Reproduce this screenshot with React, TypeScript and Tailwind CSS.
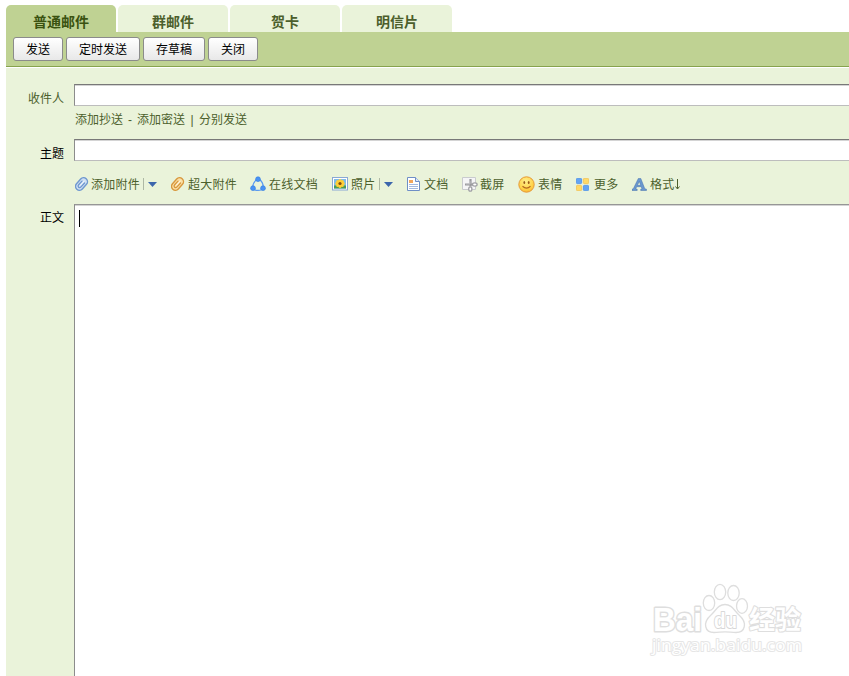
import React from "react";

const tabs = [
  { label: "普通邮件", active: true },
  { label: "群邮件", active: false },
  { label: "贺卡", active: false },
  { label: "明信片", active: false },
];

const buttons = [
  { label: "发送", width: "w-[50px]" },
  { label: "定时发送", width: "w-[74px]" },
  { label: "存草稿", width: "w-[62px]" },
  { label: "关闭", width: "w-[50px]" },
];

function Clip({ dark, light }: { dark: string; light: string }) {
  return (
    <svg width="14" height="14" viewBox="0 0 14 14" fill="none" strokeLinecap="round">
      <g transform="rotate(42 6.500 7)">
        <rect x="2.600" y="0" width="7.800" height="14" rx="3.900" fill={light} stroke={dark} strokeWidth="1.400" />
        <path d="M4.900 4.500v5c0 2.400 3.200 2.400 3.200 0V4.200" stroke={dark} strokeWidth="1.300" />
        <path d="M6.500 3v5.500" stroke="#fff" strokeWidth=".8" />
      </g>
    </svg>
  );
}

function OnlineDoc() {
  return (
    <svg width="16" height="16" viewBox="0 0 16 16">
      <path d="M7 3.500C4.500 5 3 7.500 2.800 11M9.500 3.500c2 1.500 3.700 4 3.700 7.500M4 13.500q4 1.800 8 0" fill="none" stroke="#5b9bf0" strokeWidth="1.300" />
      <g fill="#4a93f3" stroke="#3a82e4" strokeWidth=".7">
        <circle cx="8" cy="3.200" r="2.400" />
        <circle cx="3" cy="12.200" r="2.400" />
        <circle cx="13" cy="12.200" r="2.400" />
      </g>
    </svg>
  );
}

function Photo() {
  return (
    <svg width="16" height="14" viewBox="0 0 16 14">
      <rect x=".5" y=".5" width="15" height="12.500" fill="#fff" stroke="#8aa8d4" />
      <rect x="2" y="2" width="12" height="9.500" fill="#7ebbe8" />
      <path d="M2 8.500h12v3H2z" fill="#4b9a55" />
      <g fill="#ffcf33">
        <circle cx="8" cy="3.500" r="1.500" />
        <circle cx="8" cy="9.500" r="1.500" />
        <circle cx="4.800" cy="6.500" r="1.500" />
        <circle cx="11.200" cy="6.500" r="1.500" />
        <circle cx="5.700" cy="4.500" r="1.500" />
        <circle cx="10.300" cy="4.500" r="1.500" />
        <circle cx="5.700" cy="8.600" r="1.500" />
        <circle cx="10.300" cy="8.600" r="1.500" />
        <circle cx="8" cy="6.500" r="3" />
      </g>
      <circle cx="8" cy="6.500" r="1.600" fill="#7c4a10" />
    </svg>
  );
}

function Doc() {
  return (
    <svg width="13" height="14" viewBox="0 0 13 14">
      <path d="M.5.5h8l4 4v9H.5z" fill="#fff" stroke="#6f8fc6" />
      <path d="M8.500.5v4h4" fill="#dce8fa" stroke="#6f8fc6" />
      <path d="M2 3h4v3H2z" fill="#f3a65a" />
      <path d="M2 7.500h9M2 9.500h9M2 11.500h9" stroke="#a3b9df" />
    </svg>
  );
}

function Scissors() {
  return (
    <svg width="16" height="16" viewBox="0 0 16 16" fill="none">
      <path d="M.5 1.500h13v12H.5z" fill="#f5f5f7" stroke="#c9cbce" />
      <path d="M8.500 3v7.500M3 8.500h7.500" stroke="#9a9a9e" strokeWidth="2.200" />
      <path d="M8 5v3H4" stroke="#c8c8cc" strokeWidth=".8" />
      <ellipse cx="12.800" cy="8.500" rx="2.300" ry="1.600" fill="#fff" stroke="#a0a0a5" strokeWidth="1.300" />
      <ellipse cx="8.300" cy="13" rx="1.600" ry="2.200" fill="#fff" stroke="#a0a0a5" strokeWidth="1.300" />
    </svg>
  );
}

function Smiley() {
  return (
    <svg width="17" height="17" viewBox="0 0 17 17">
      <defs>
        <radialGradient id="face" cx=".45" cy=".3" r=".75">
          <stop stopColor="#fff08f" />
          <stop offset=".7" stopColor="#ffd044" />
          <stop offset="1" stopColor="#f8b238" />
        </radialGradient>
      </defs>
      <circle cx="8.500" cy="8.500" r="7.700" fill="url(#face)" stroke="#e59a38" />
      <ellipse cx="6.300" cy="6.500" rx=".9" ry="1.500" fill="#9a5a1a" />
      <ellipse cx="10.700" cy="6.500" rx=".9" ry="1.500" fill="#9a5a1a" />
      <path d="M4.500 10.300q4 3.700 8 0" fill="none" stroke="#b5691f" strokeWidth="1.200" />
    </svg>
  );
}

function More() {
  return (
    <svg width="13" height="13" viewBox="0 0 13 13">
      <rect x=".4" y=".4" width="5.200" height="5.200" rx=".8" fill="#64a4f5" stroke="#4a90ea" strokeWidth=".8" />
      <rect x="7.400" y=".4" width="5.200" height="5.200" rx=".8" fill="#ffda68" stroke="#f4c252" strokeWidth=".8" />
      <rect x=".4" y="7.400" width="5.200" height="5.200" rx=".8" fill="#ffda68" stroke="#f4c252" strokeWidth=".8" />
      <rect x="7.400" y="7.400" width="5.200" height="5.200" rx=".8" fill="#64a4f5" stroke="#4a90ea" strokeWidth=".8" />
    </svg>
  );
}

function Format() {
  return (
    <svg width="15" height="13" viewBox="0 0 15 13">
      <path d="M0 12.500v-1.300l1.300-.4L6.300.5h2.500l4 10.300 1.700.4v1.300H8.700v-1.300l1.300-.4-.8-2.100H4.700l-1 2.100 1.500.4v1.300zM5.400 7.300h3.300L7.300 3.400z" fill="#6a97cf" stroke="#4470ac" strokeWidth=".5" />
    </svg>
  );
}

function Drop() {
  return (
    <>
      <span className="ml-[3px] h-3 w-px bg-[#aeb8a4]" />
      <svg className="ml-1 mt-px" width="9" height="5" viewBox="0 0 9 5">
        <path d="M0 0h9L4.500 5z" fill="#3c66ac" />
      </svg>
    </>
  );
}

function Tool({ icon, label, className, gap, drop }: { icon: React.ReactNode; label: string; className: string; gap: string; drop?: boolean }) {
  return (
    <div className={"flex shrink-0 items-center " + className}>
      {icon}
      <span className={"pt-0.5 tracking-[0.25px] " + gap}>{label}</span>
      {drop && <Drop />}
    </div>
  );
}

function Watermark() {
  return (
    <svg className="absolute left-[640px] top-[575px]" width="180" height="90" viewBox="0 0 180 90">
      <g fill="#fff" stroke="#dedede" strokeWidth="1.300" strokeLinejoin="round">
        <text x="13" y="56" fontSize="34" fontWeight="700" textLength="49" lengthAdjust="spacingAndGlyphs" strokeWidth="3" paintOrder="stroke" fontFamily="Liberation Sans, sans-serif">Bai</text>
        <ellipse cx="69" cy="28" rx="5.700" ry="7.500" />
        <ellipse cx="80" cy="17" rx="5.700" ry="7.700" />
        <ellipse cx="93.500" cy="18" rx="5.700" ry="7.500" />
        <ellipse cx="102" cy="31" rx="5.500" ry="7.300" />
        <path d="M85 29.500c7 0 9 6 14 10.500 9 8 6 17.500-3 17.500-5 0-6-.7-11-.7s-6 .7-11 .7c-9 0-12-9.500-3-17.500 5-4.500 7-10.500 14-10.500z" />
        <text x="74" y="53" fontSize="22" fontWeight="700" textLength="23" lengthAdjust="spacingAndGlyphs" strokeWidth="2" paintOrder="stroke" stroke="#d8d8d8" fontFamily="Liberation Sans, sans-serif">du</text>
        <text x="109" y="54" fontSize="26" fontWeight="700" textLength="52" lengthAdjust="spacingAndGlyphs" strokeWidth="2.200" paintOrder="stroke" fontFamily="Noto Sans CJK SC, sans-serif">经验</text>
        <text x="12" y="76" fontSize="17" fontWeight="400" textLength="150" lengthAdjust="spacingAndGlyphs" strokeWidth="2" stroke="#e6e6e6" paintOrder="stroke" fontFamily="Open Sans, sans-serif">jingyan.baidu.com</text>
      </g>
    </svg>
  );
}

const inputClass = "h-[22px] min-w-0 flex-1 border-b border-l border-t border-b-[#bdbdbd] border-l-[#8c8c8c] border-t-[#787878] bg-white shadow-[inset_0_1px_0_#d4d4d4] outline-none";

export default function App() {
  return (
    <div className="relative flex h-[676px] w-[849px] flex-col overflow-hidden bg-white pl-1.5 pt-[5px] font-['Liberation_Sans','Noto_Sans_CJK_SC',sans-serif] text-xs text-[#4c5f2c]">
      <nav className="flex h-[27px] shrink-0 gap-0.5">
        {tabs.map((t) => (
          <div
            key={t.label}
            className={
              "flex w-[110px] justify-center rounded-t-[5px] pt-[7px] text-sm font-bold leading-5 " +
              (t.active ? "bg-[#bfd293] text-[#3a5210]" : "bg-[#eaf3da] text-[#4c5f2c]")
            }
          >
            {t.label}
          </div>
        ))}
      </nav>

      <div className="flex h-[35px] shrink-0 gap-[3px] border-b border-[#87a34d] bg-[#bfd293] pl-[7px] pt-[5px]">
        {buttons.map((b) => (
          <button
            key={b.label}
            className={"h-6 rounded-[3px] border border-[#8b8b8b] bg-linear-to-b from-white to-[#e8e8e8] pt-0.5 text-xs leading-5 text-black " + b.width}
          >
            {b.label}
          </button>
        ))}
      </div>

      <main className="flex min-h-0 flex-1 flex-col border-t border-white bg-[#eaf3da] pt-4">
        <div className="flex h-[22px] shrink-0">
          <label className="w-[68px] pr-2.5 pt-1.5 text-right leading-[18px]">收件人</label>
          <input className={inputClass} />
        </div>
        <div className="ml-[69px] mt-[5px] flex h-[18px] shrink-0 leading-[18px]">
          <span>添加抄送</span>
          <span className="w-[14px] text-center">-</span>
          <span>添加密送</span>
          <span className="w-[14px] text-center">|</span>
          <span>分别发送</span>
        </div>
        <div className="mt-2.5 flex h-[22px] shrink-0">
          <label className="w-[68px] pr-2.5 pt-1.5 text-right leading-[18px] text-black">主题</label>
          <input className={inputClass} />
        </div>
        <div className="ml-[69px] mt-[13px] flex h-5 shrink-0 items-center leading-5">
          <Tool className="w-[96px]" gap="ml-0.5" icon={<Clip dark="#7098cf" light="#cfe0f3" />} label="添加附件" drop />
          <Tool className="w-[79px]" gap="ml-[3px]" icon={<Clip dark="#d8983f" light="#fbe0a6" />} label="超大附件" />
          <Tool className="w-[82px]" gap="ml-[3px]" icon={<OnlineDoc />} label="在线文档" />
          <Tool className="w-[75px]" gap="ml-[3px]" icon={<Photo />} label="照片" drop />
          <Tool className="w-[55px]" gap="ml-1" icon={<Doc />} label="文档" />
          <Tool className="w-[56px]" gap="ml-0.5" icon={<Scissors />} label="截屏" />
          <Tool className="w-[58px]" gap="ml-[3px]" icon={<Smiley />} label="表情" />
          <Tool className="w-[56px]" gap="ml-[5px]" icon={<More />} label="更多" />
          <Tool className="" gap="ml-[3px]" icon={<Format />} label="格式" />
          <svg className="-ml-px" width="7" height="11" viewBox="0 0 7 11">
            <path d="M3.500 0v9.500M1.500 7.500l2 2.500 2-2.500" fill="none" stroke="#4c5f2c" />
          </svg>
        </div>
        <div className="mt-2.5 flex min-h-0 flex-1">
          <label className="w-[68px] pr-2.5 pt-[5px] text-right leading-[18px] text-black">正文</label>
          <div className="min-w-0 flex-1 border-l border-t border-l-[#8c8c8c] border-t-[#969696] bg-white pl-1 pt-[5px] shadow-[inset_0_1px_0_#d4d4d4]">
            <div className="h-[17px] w-px bg-black" />
          </div>
        </div>
      </main>
      <Watermark />
    </div>
  );
}
